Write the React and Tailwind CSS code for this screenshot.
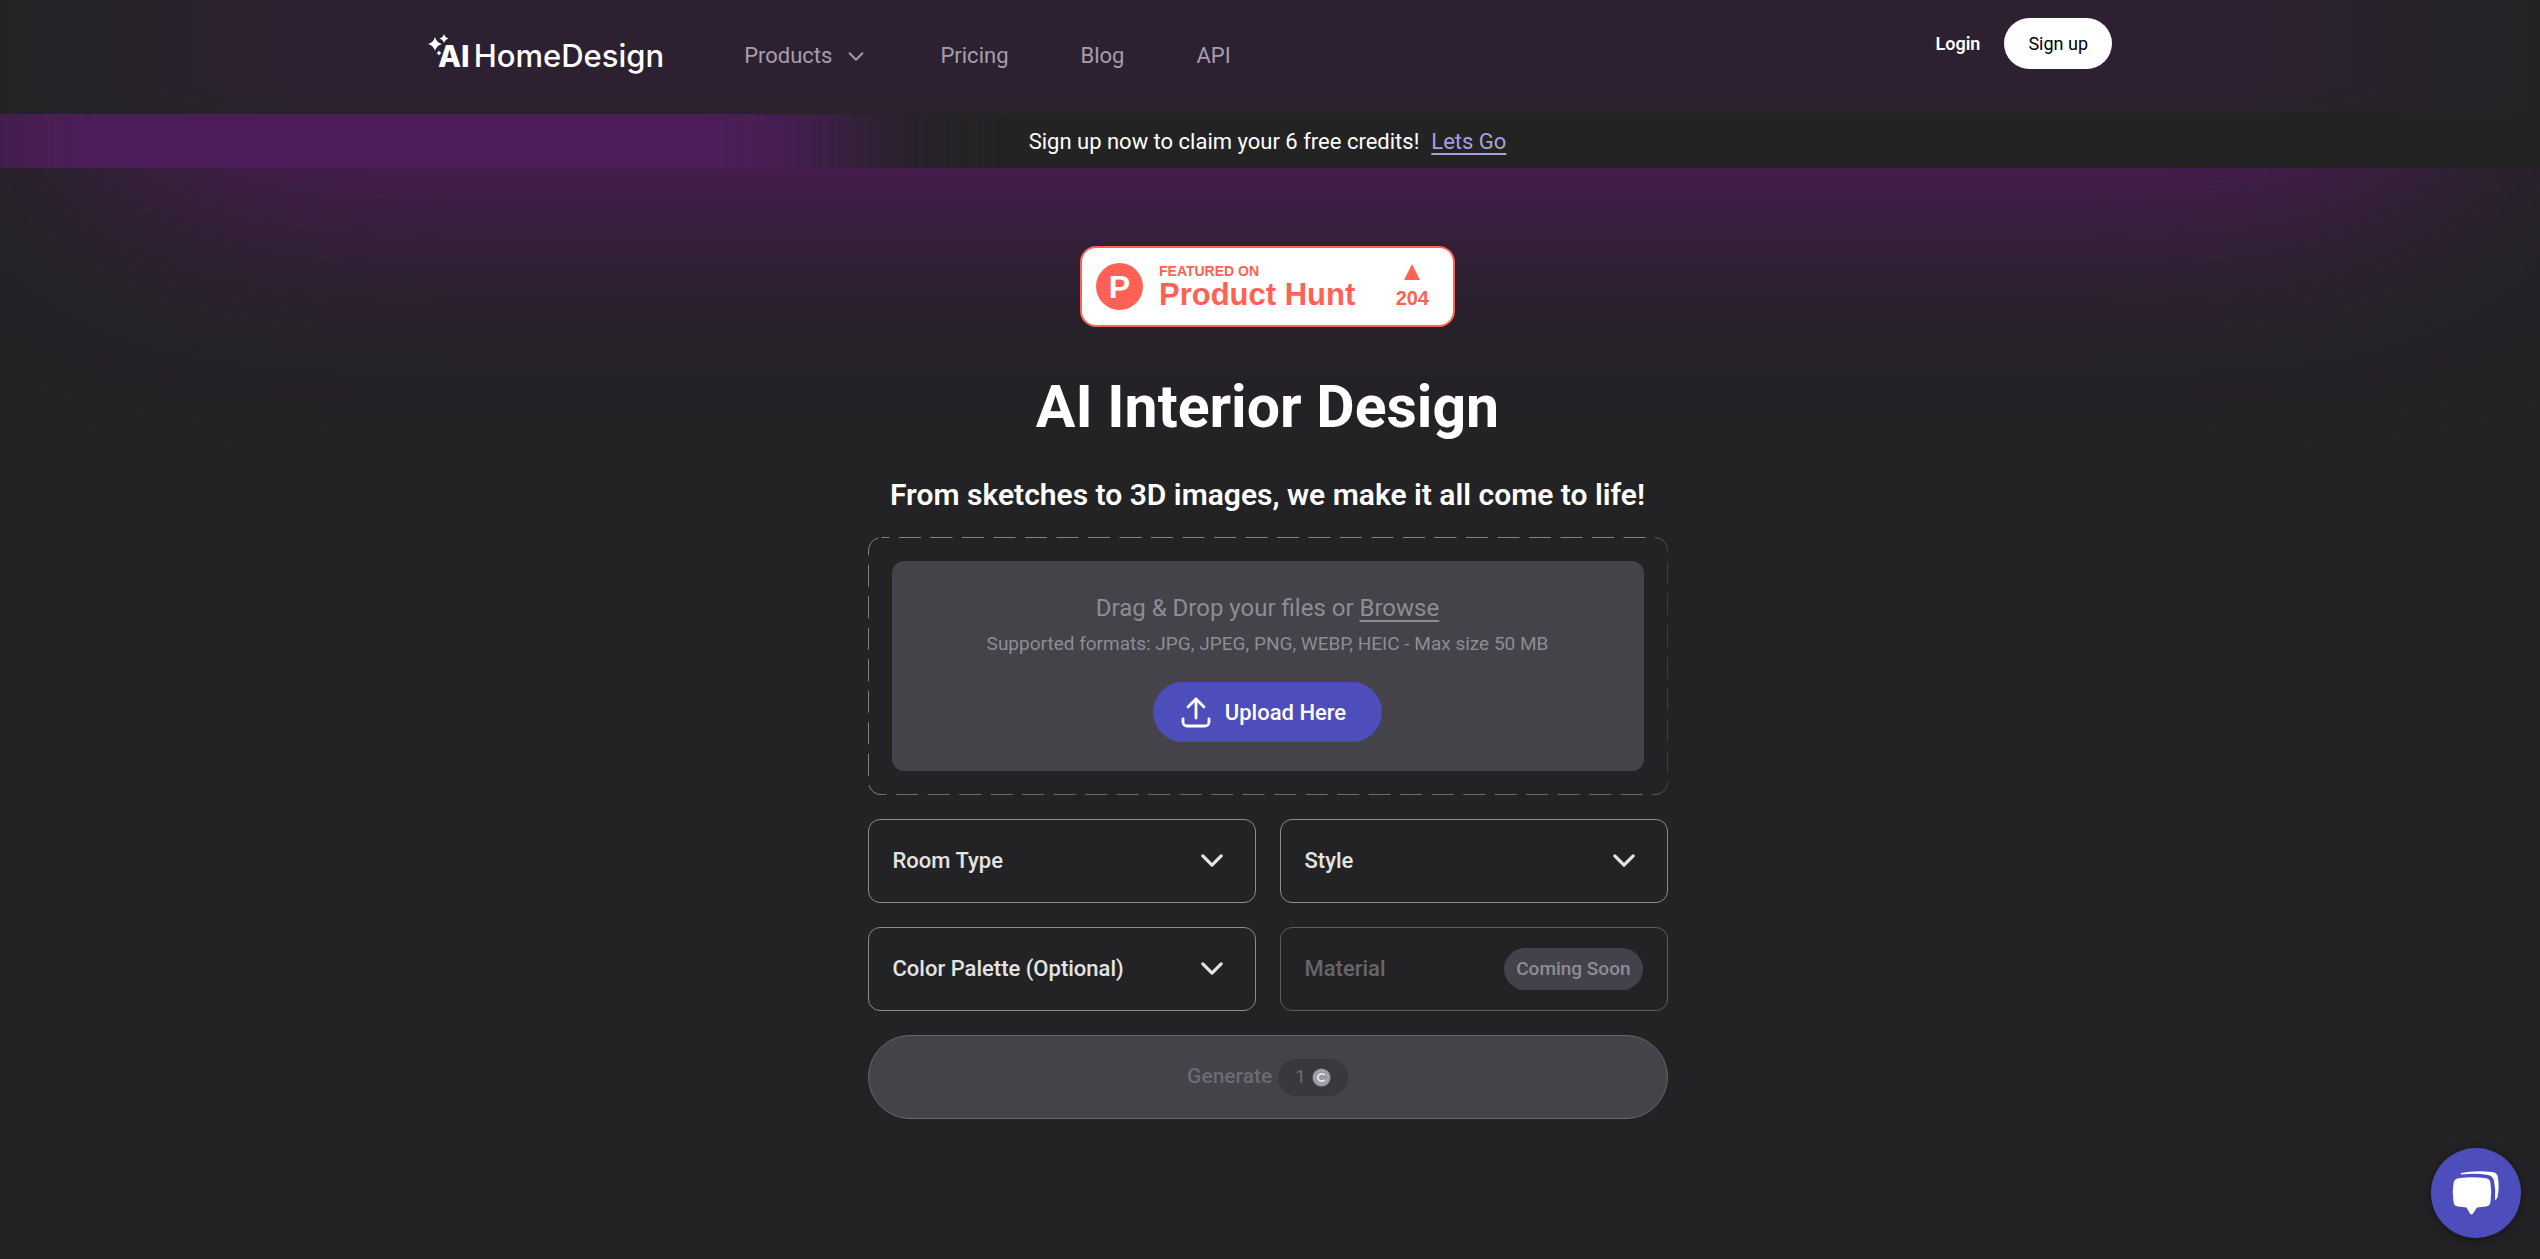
import React from 'react';

function Chevron({ className }) {
  return (
    <svg viewBox="0 0 24 14" className={className} fill="none" stroke="currentColor" strokeLinecap="round" strokeLinejoin="round" aria-hidden="true">
      <path d="M2 2l10 10L22 2" />
    </svg>
  );
}

function Logo() {
  return (
    <a href="#home" className="flex items-start pb-0.5 text-white font-[Inter,sans-serif]">
      <svg viewBox="0 0 22 22" className="-mt-1 -mr-3 size-[22px]" fill="currentColor" aria-hidden="true">
        <path d="M7 3Q8.500 8.500 14 10Q8.500 11.500 7 17Q5.500 11.500 0 10Q5.500 8.500 7 3Z" />
        <path d="M16 0Q17 3.500 20.500 4.500Q17 5.500 16 9Q15 5.500 11.500 4.500Q15 3.500 16 0Z" />
        <path d="M11 16.500Q11.700 18.300 13.500 19Q11.700 19.700 11 21.500Q10.300 19.700 8.500 19Q10.300 18.300 11 16.500Z" />
      </svg>
      <span className="text-[30px] leading-9 font-extrabold">AI</span>
      <span className="ml-1 text-[31px] leading-9 font-medium">HomeDesign</span>
    </a>
  );
}

function Header() {
  return (
    <header className="bg-[linear-gradient(to_right,#232325,transparent_12%,transparent_88%,#232325),linear-gradient(#2d2131_75%,#292329)]">
      <div className="mx-auto flex h-[114px] max-w-[1684px] justify-between">
        <div className="flex items-center gap-20">
          <Logo />
          <nav className="flex items-center gap-[72px] pb-0.5 text-[22px] leading-7 text-[#a59dad]">
            <button type="button" className="flex items-center gap-4 pr-1">
              Products
              <Chevron className="h-[9px] w-4 stroke-3" />
            </button>
            <a href="#pricing">Pricing</a>
            <a href="#blog">Blog</a>
            <a href="#api">API</a>
          </nav>
        </div>
        <div className="mt-[18px] flex h-[51px] items-center gap-6 text-[18px]">
          <a href="#login" className="font-semibold text-white">Login</a>
          <a href="#signup" className="flex h-full items-center rounded-full bg-white px-6 text-black">Sign up</a>
        </div>
      </div>
    </header>
  );
}

function Banner() {
  return (
    <div className="relative overflow-hidden bg-[#232324]">
      <div className="absolute -inset-y-[300px] -left-[45px] w-[35%] bg-[#4d1d5b] blur-[70px]" />
      <div className="relative flex h-[54px] items-center justify-center gap-3 pr-[5px] text-[22px]">
        <span className="text-white">Sign up now to claim your 6 free credits!</span>
        <a href="#signup" className="text-[#a8a0dc] underline underline-offset-4">Lets Go</a>
      </div>
    </div>
  );
}

function ProductHunt() {
  return (
    <a href="#product-hunt" className="flex h-[81px] w-[375px] items-center rounded-2xl border-2 border-[#ff6154] bg-white pl-[14px] pr-6 font-['Liberation_Sans',sans-serif] font-bold text-[#ff6154]">
      <span className="flex size-[47px] items-center justify-center rounded-full bg-[#ff6154] text-[32px] text-white">P</span>
      <span className="ml-4 flex flex-1 flex-col">
        <span className="text-[14px] leading-4">FEATURED ON</span>
        <span className="text-[31px] leading-8">Product Hunt</span>
      </span>
      <span className="flex flex-col items-center gap-1.5">
        <svg viewBox="0 0 16 16" className="size-4" fill="currentColor" aria-hidden="true"><path d="M8 0L16 16H0Z" /></svg>
        <span className="text-[20px] leading-6">204</span>
      </span>
    </a>
  );
}

function UploadBox() {
  return (
    <section className="relative p-6">
      <svg className="absolute inset-0 size-full" fill="none" aria-hidden="true">
        <defs>
          <linearGradient id="dash">
            <stop offset="0.970" stopColor="#818186" />
            <stop offset="1" stopColor="#454548" />
          </linearGradient>
        </defs>
        <rect x="0.500" y="0.500" width="99.900%" height="99.700%" rx="13" stroke="url(#dash)" strokeDasharray="22 9.500" strokeDashoffset="14" />
      </svg>
      <div className="flex h-[210px] flex-col items-center rounded-xl bg-[#434349] pt-8 text-[#8d8d94]">
        <p className="text-2xl leading-[30px]">
          Drag &amp; Drop your files or <button type="button" className="underline underline-offset-4">Browse</button>
        </p>
        <p className="mt-[7px] text-[19px] leading-7">Supported formats: JPG, JPEG, PNG, WEBP, HEIC - Max size 50 MB</p>
        <button type="button" className="mt-6 flex h-[60px] items-center gap-3.5 rounded-full bg-[#4e4dbc] pl-7 pr-9 text-[22px] font-medium text-white">
          <svg viewBox="0 0 30 32" className="h-8 w-[30px]" fill="none" stroke="currentColor" strokeWidth="2.800" strokeLinecap="round" strokeLinejoin="round" aria-hidden="true">
            <path d="M15 22V3M7 11l8-8 8 8M2 23v3a4 4 0 0 0 4 4h18a4 4 0 0 0 4-4v-3" />
          </svg>
          Upload Here
        </button>
      </div>
    </section>
  );
}

function Picker({ label }) {
  return (
    <button type="button" aria-haspopup="listbox" className="flex h-[84px] items-center justify-between rounded-xl border border-[#8b8b8f] pb-0.5 pl-6 pr-8 text-[22px] font-medium text-[#e4e4e6]">
      {label}
      <Chevron className="h-[13px] w-[22px] stroke-[3.5]" />
    </button>
  );
}

export default function App() {
  return (
    <div className="min-h-screen bg-[#232325] font-[Roboto,sans-serif]">
      <Header />
      <Banner />
      <main className="relative overflow-hidden pb-24 pr-[5px] pt-[78px]">
        <div className="absolute inset-x-[130px] -top-[445px] h-[400px] bg-[#821294] blur-[135px]" />
        <div className="relative mx-auto flex max-w-[800px] flex-col">
          <div className="flex justify-center"><ProductHunt /></div>
          <h1 className="mt-11 text-center text-[59px] leading-[72px] font-bold text-white">AI Interior Design</h1>
          <h2 className="mb-6 mt-[34px] text-center text-[30px] leading-9 font-semibold text-white">From sketches to 3D images, we make it all come to life!</h2>
          <UploadBox />
          <div className="mt-6 grid grid-cols-2 gap-6">
            <Picker label="Room Type" />
            <Picker label="Style" />
            <Picker label="Color Palette (Optional)" />
            <button type="button" disabled className="flex h-[84px] items-center justify-between rounded-xl border border-[#5d5d61] px-6 text-[22px] font-medium text-[#66666b]">
              <span className="pb-0.5">Material</span>
              <span className="flex h-[42px] items-center rounded-full bg-[#42424a] px-3 text-[19px] text-[#8d8d95]">Coming Soon</span>
            </button>
          </div>
          <button type="button" disabled className="mt-6 flex h-[84px] items-center justify-center gap-1.5 rounded-full border border-[#66666b] bg-[#434349] text-[21px] font-medium text-[#6b6b70]">
            Generate
            <span className="flex h-[37px] items-center gap-1.5 rounded-full bg-[#38383d] px-[17px] text-[19px] font-normal">
              1
              <svg viewBox="0 0 20 20" className="size-[19px]" fill="none" aria-hidden="true">
                <circle cx="10" cy="10" r="9.500" fill="#96969e" />
                <circle cx="10" cy="10" r="7" stroke="#b4b4bc" />
                <path d="M13.500 7.500C12.500 6.400 11.300 6.200 10 6.200A3.800 3.800 0 0 0 10 13.800C11.300 13.800 12.500 13.600 13.500 12.500" stroke="#e8e8ee" strokeWidth="2" />
              </svg>
            </span>
          </button>
        </div>
      </main>
      <button type="button" aria-label="Open chat" className="fixed bottom-[21px] right-[19px] flex size-[90px] items-center justify-center rounded-full bg-[#4e4dbc] text-white shadow-[0_2px_12px_rgba(0,0,0,0.4)]">
        <svg viewBox="0 0 48 46" className="h-[46px] w-12" fill="currentColor" aria-hidden="true">
          <path d="M8 8Q20 6.500 33 8Q38 8.500 38.500 13Q40 22 38.500 32Q38 36 34 36.500L25 37.500L21 43.500Q19.500 45.500 18 43.500L14.500 37.500L6 36.500Q2 36 1.500 32Q0 22 1.500 13Q2 8.500 8 8Z" />
          <path d="M9 3Q24 0 40 2Q45.500 2.500 46 8Q47.500 18 45.500 27Q45 29.500 43 30Q44 20 42 11Q41 6 36 5Q24 3 9 4.500Z" />
        </svg>
      </button>
    </div>
  );
}
